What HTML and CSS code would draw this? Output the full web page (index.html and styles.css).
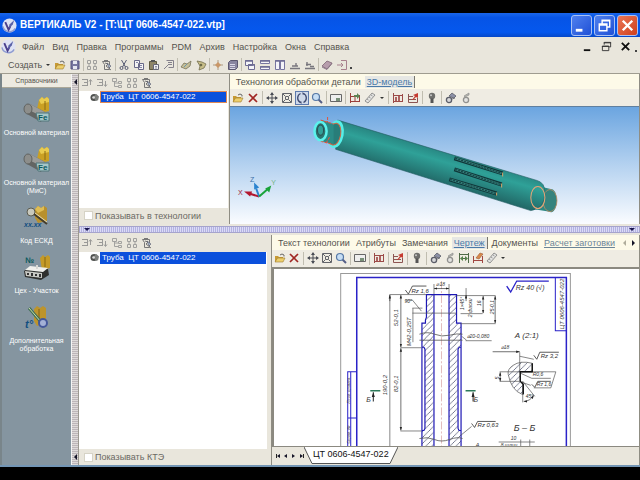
FILE: index.html
```html
<!DOCTYPE html>
<html lang="ru">
<head>
    <meta charset="UTF-8">
    <meta name="viewport" content="width=device-width, initial-scale=1.0">
    <title>ВЕРТИКАЛЬ V2</title>
    <link rel="stylesheet" href="styles.css">
</head>
<body>
    <!-- icon sprite -->
    <svg class="sprite" aria-hidden="true">
        <symbol id="logo" viewBox="0 0 16 16">
            <circle cx="8" cy="8" r="7.5" fill="#dfe3f4"/>
            <path d="M1 9a7 7 0 0 0 13 2" fill="none" stroke="#8e9bd0" stroke-width="1.5"/>
            <path d="M3.5 4.5l3.5 8 2-4" fill="none" stroke="#4a3f8c" stroke-width="2"/>
            <path d="M8 7l5-5-1.500 5-4 4z" fill="#5b63a8"/>
        </symbol>
        <symbol id="open" viewBox="0 0 12 12">
            <path d="M1 10V4h3l1 1h4v5z" fill="#c79a35"/>
            <path d="M1 10l2.500-4H11l-2 4z" fill="#edcf6c" stroke="#9b7a31" stroke-width=".6"/>
            <path d="M6 3q2-2 4 0v1.500" fill="none" stroke="#686868"/>
        </symbol>
        <symbol id="save" viewBox="0 0 12 12">
            <path d="M2 2h8v8H2z" fill="#77769f" stroke="#565380"/>
            <path d="M4 2h4v3H4zM4 7h4v3H4z" fill="#e6e6f0"/>
        </symbol>
        <symbol id="tree-up" viewBox="0 0 12 12">
            <path d="M1 2.500h6M3 5.500h4M1 8.500h6M6.500 2v7M9.500 8V3M8 4.500l1.500-2 1.500 2" fill="none" stroke="#9a9a98"/>
        </symbol>
        <symbol id="tree-down" viewBox="0 0 12 12">
            <path d="M1 2.500h6M3 5.500h4M1 8.500h6M6.500 2v7M9.500 4v5M8 7.500l1.500 2 1.500-2" fill="none" stroke="#9a9a98"/>
        </symbol>
        <symbol id="nodes" viewBox="0 0 12 12">
            <path d="M1.500 1.500h4v3h-4zM7.500 4.500h3v2h-3zM7.500 8.500h3v2h-3zM3.500 5v4.500h4M3.500 6h4" fill="none" stroke="#a2a2a0"/>
        </symbol>
        <symbol id="grid" viewBox="0 0 12 12">
            <path d="M1.500 1.500h3v3h-3zM7.500 1.500h3v3h-3zM1.500 7.500h3v3h-3zM7.500 7.500h3v3h-3zM3 5v2M9 5v2" fill="none" stroke="#a0a09e"/>
        </symbol>
        <symbol id="clipnode" viewBox="0 0 12 12">
            <path d="M1.500 2.500h7v8h-5v-5zM3 1.500h4M4 4l3 1-2 2 5 4" fill="none" stroke="#777"/>
            <path d="M6 4l4 3-2 2z" fill="#a8b9cf" stroke="#556"  stroke-width=".6"/>
        </symbol>
        <symbol id="cut" viewBox="0 0 12 12">
            <path d="M3.500 1l4 7M8.500 1l-4 7" stroke="#565a72" fill="none"/>
            <circle cx="3.500" cy="9" r="1.500" fill="none" stroke="#565a72"/>
            <circle cx="8.500" cy="9" r="1.500" fill="none" stroke="#565a72"/>
        </symbol>
        <symbol id="copy" viewBox="0 0 12 12">
            <path d="M1.500 1.500h5v7h-5zM5.500 4.500h5v6h-5z" fill="#f4f4f4" stroke="#686888"/>
            <path d="M7 6.500h2M7 8.500h2M3 3.500h2" stroke="#88a"/>
        </symbol>
        <symbol id="paste" viewBox="0 0 12 12">
            <path d="M1.500 2.500h7v8h-7z" fill="#8e8568" stroke="#5e593f"/>
            <path d="M3 1h4v2H3z" fill="#555"/>
            <path d="M5.500 5.500h5v5h-5z" fill="#f0f0f4" stroke="#667"/>
            <path d="M7 7.500h2M7 9h2" stroke="#778" stroke-width=".8"/>
        </symbol>
        <symbol id="sheet" viewBox="0 0 12 12">
            <path d="M3.500 1.500h7v7h-5M5 3.500h4M5 5.500h4M1 10l4-4" fill="none" stroke="#84818c"/>
        </symbol>
        <symbol id="hand" viewBox="0 0 12 12">
            <path d="M1 8l3-4 3 1 4-3-1 5-4 3z" fill="#c6bf98" stroke="#77735b" stroke-width=".8"/>
            <path d="M4 8l3-3" stroke="#6c96a8"/>
        </symbol>
        <symbol id="hand2" viewBox="0 0 12 12">
            <path d="M2 2l5 1 4 2-2 4-5 2 1-4z" fill="#c8be88" stroke="#736e4f" stroke-width=".8"/>
            <circle cx="6" cy="6" r="1.300" fill="#6b6a48"/>
        </symbol>
        <symbol id="spark" viewBox="0 0 12 12">
            <path d="M6 1v10M1 6h10" stroke="#ab9a83"/>
            <path d="M6 3l3 3-3 3-3-3z" fill="#c99768"/>
        </symbol>
        <symbol id="stack" viewBox="0 0 12 12">
            <path d="M1.500 3.500l2-2h7v7l-2 2h-7z" fill="#8985a0" stroke="#5c5870"/>
            <path d="M3 5.500h5M3 7.500h5M3 9.500h5" stroke="#d9d7e6"/>
        </symbol>
        <symbol id="cascade" viewBox="0 0 12 12">
            <path d="M1.500 1.500h7v5h-7zM4.500 5.500h6v5h-6z" fill="#f4f4f8" stroke="#6e6c94"/>
            <path d="M1 2h8M4 6h7" stroke="#6e6c94" stroke-width="1.500"/>
        </symbol>
        <symbol id="tile-h" viewBox="0 0 12 12">
            <path d="M1.500 1.500h9v3h-9zM1.500 7.500h9v3h-9z" fill="#f4f4f8" stroke="#7776a0"/>
            <path d="M1 2h10M1 8h10" stroke="#6e6c94" stroke-width="1.500"/>
        </symbol>
        <symbol id="tile-v" viewBox="0 0 12 12">
            <path d="M1.500 1.500h4v9h-4zM6.500 1.500h4v9h-4z" fill="#f4f4f8" stroke="#7776a0"/>
            <path d="M1 2h10" stroke="#6e6c94" stroke-width="1.500"/>
        </symbol>
        <symbol id="tray-a" viewBox="0 0 12 12">
            <path d="M1 9.500h10M3 7h6M7 4v3" fill="none" stroke="#79777e" stroke-width="1.400"/>
        </symbol>
        <symbol id="tray-b" viewBox="0 0 12 12">
            <path d="M2 5.500h5M1 9.500h10M3 3v4M6 7.500h4" fill="none" stroke="#79777e" stroke-width="1.400"/>
        </symbol>
        <symbol id="book" viewBox="0 0 12 12">
            <path d="M1 7l5-5 5 2-5 6z" fill="#b79dac" stroke="#7e6575" stroke-width=".8"/>
            <path d="M1 8l5 2.500 5-6" fill="none" stroke="#8a7787"/>
        </symbol>
        <symbol id="exit" viewBox="0 0 12 12">
            <path d="M5 1.500h5.500v9H5M1 6h6M5 4l2 2-2 2" fill="none" stroke="#a8818e"/>
        </symbol>
        <symbol id="delete" viewBox="0 0 12 12">
            <path d="M2 2l8 8M10 2l-8 8" stroke="#a02623" stroke-width="1.700"/>
        </symbol>
        <symbol id="move" viewBox="0 0 12 12">
            <path d="M6 1v10M1 6h10" stroke="#4a4d55"/>
            <path d="M4 3l2-3 2 3zM4 9l2 3 2-3zM3 4L0 6l3 2zM9 4l3 2-3 2z" fill="#4a4d55"/>
        </symbol>
        <symbol id="fit" viewBox="0 0 12 12">
            <path d="M1.500 1.500h9v9h-9zM4.500 4.500h3v3h-3zM2 2l2 2M10 2L8 4M2 10l2-2M10 10l-2-2" fill="none" stroke="#62646a"/>
        </symbol>
        <symbol id="rotate" viewBox="0 0 12 12">
            <path d="M4.500 1.500a5 5 0 0 0 0 9M7.500 1.500a5 5 0 0 1 0 9" fill="none" stroke="#3f4a70" stroke-width="1.300"/>
            <path d="M2.500 9.500h3v2.500zM9.500 2.500h-3V0z" fill="#3f4a70"/>
        </symbol>
        <symbol id="zoom" viewBox="0 0 12 12">
            <path d="M7.500 7.500l3.500 3.500" stroke="#555f86" stroke-width="2"/>
            <circle cx="5" cy="5" r="3.500" fill="#c7def5" stroke="#5577a5" stroke-width="1.200"/>
        </symbol>
        <symbol id="window" viewBox="0 0 12 12">
            <path d="M.5 2.500h11v7H.5z" fill="#eee" stroke="#666"/>
            <path d="M6 6h4v3H6z" fill="#789078"/>
        </symbol>
        <symbol id="insert" viewBox="0 0 12 12">
            <path d="M1.500 1v10M1 4.500h10M1 9.500h10M10.500 3v7M6 5v4" fill="none" stroke="#9b3f3a"/>
            <path d="M5 3h3V1l3 3-3 3V5H5z" fill="#5c8453"/>
        </symbol>
        <symbol id="marks" viewBox="0 0 12 12">
            <path d="M1.500 1v10M1 3.500h10M1 9.500h10M10.500 2v8" fill="none" stroke="#9b4a48"/>
            <path d="M3 5h2v4H3zM6 4h2v5H6z" fill="#ae6360"/>
        </symbol>
        <symbol id="marks-arrow" viewBox="0 0 12 12">
            <path d="M1.500 2v8.500h9V6M1 4.500h5M1 7.500h8" fill="none" stroke="#8d5552"/>
            <path d="M5 8l3-4-2-1 5-2v5L9 5 6 8z" fill="#c53b31"/>
        </symbol>
        <symbol id="ruler" viewBox="0 0 12 12">
            <path d="M1 9l7-8 3 2-7 8z" fill="#e4e4e2" stroke="#888" stroke-width=".9"/>
            <path d="M3 7l1.500 1M5 5l1.500 1M7 3l1.500 1" stroke="#777" stroke-width=".7"/>
        </symbol>
        <symbol id="bulb" viewBox="0 0 12 12">
            <circle cx="6" cy="4" r="3.200" fill="#6f6f6d"/>
            <path d="M4.500 6.500h3V11h-3z" fill="#555"/>
            <circle cx="5" cy="3.200" r="1" fill="#c8c8c8"/>
        </symbol>
        <symbol id="gears" viewBox="0 0 12 12">
            <circle cx="4" cy="8" r="2.600" fill="#d8d8da" stroke="#5b5d68" stroke-width="1.300"/>
            <path d="M4 4l3-3 4 3-2 2-3-1zM7 7l3-1" fill="#8c90a6" stroke="#5b5d68" stroke-width=".8"/>
        </symbol>
        <symbol id="gear-light" viewBox="0 0 12 12">
            <circle cx="6" cy="8" r="2.600" fill="#e4e4e2" stroke="#91918f" stroke-width="1.300"/>
            <path d="M4 4l5-3v2L5 5z" fill="#b4b4b0" stroke="#91918f" stroke-width=".7"/>
        </symbol>
        <symbol id="fitgreen" viewBox="0 0 12 12">
            <path d="M1.500 1v10M10.500 1v10M1 2.500h10M3 6.500h6" fill="none" stroke="#4f6a47"/>
            <path d="M5 4v5L2 6.500zM7 4v5l3-2.500z" fill="#54804a"/>
        </symbol>
        <symbol id="fitred" viewBox="0 0 12 12">
            <path d="M1.500 4v7M10.500 4v7M2 8.500h8" fill="none" stroke="#a14742"/>
            <path d="M4 6l4-5 3 1-4 5z" fill="#d88a4b" stroke="#9e5a38" stroke-width=".6"/>
        </symbol>
        <symbol id="part" viewBox="0 0 10 10">
            <circle cx="4.500" cy="5" r="4" fill="#4f514f"/>
            <path d="M4 4l3-3 3 3-1 4-3 1z" fill="#7d807d"/>
            <circle cx="4" cy="5" r="1.500" fill="#dadada"/>
        </symbol>

        <symbol id="material" viewBox="0 0 28 28">
            <path d="M16 4l3-3 2 2 3-2 2 2v12l-8 2-4-4z" fill="#caa023"/>
            <path d="M16 4l3-3 2 2 3-2 2 2v3l-8 2z" fill="#e9cb4e"/>
            <path d="M22 5v9" stroke="#8a6b14"/>
            <path d="M7 8L22 16 18 26 4 18z" fill="#636563"/>
            <path d="M7 8L22 16l-2 5L4 13z" fill="#9b9c99"/>
            <ellipse cx="5" cy="13" rx="4" ry="5" fill="#8d8e8b" stroke="#60625f"/>
            <path d="M13 17h13v8H15z" fill="#a6c6c8" stroke="#51777b"/>
            <text x="15" y="24" class="glyph-bold">Fe</text>
        </symbol>
        <symbol id="eskd" viewBox="0 0 28 28">
            <path d="M12 5l3-3 3 2 3-2 3 2v13l-9 2-3-5z" fill="#b8902d"/>
            <path d="M12 5l3-3 3 2 3-2v4l-6 3z" fill="#dfbd55"/>
            <circle cx="8" cy="8" r="4" fill="#c9c9bd" stroke="#5d5d51"/>
            <path d="M11 10l13 10" stroke="#443d2c" stroke-width="2"/>
            <path d="M12 9l12 9" stroke="#e2d9b4"/>
            <text x="1" y="23" class="glyph-code">xx.xx</text>
        </symbol>
        <symbol id="shop" viewBox="0 0 28 28">
            <path d="M17 4l3-3 2 2 3-2 2 2v11l-8 2z" fill="#c49a28"/>
            <path d="M22 3v10" stroke="#86660f"/>
            <path d="M1 17l6-4 18 2 1 6-8 5L2 23z" fill="#2f302e"/>
            <path d="M2 16l5-4 18 2-5 4z" fill="#f0f0ec"/>
            <path d="M2 17l17 2v5L3 22z" fill="#c9cac5"/>
            <path d="M5 19v2M9 19v3M13 20v2M17 20v3" stroke="#333" stroke-width="2"/>
            <path d="M14 15v-4" stroke="#d9d9d5" stroke-width="2"/>
            <text x="2" y="9" class="glyph-bold">№</text>
        </symbol>
        <symbol id="extra" viewBox="0 0 28 28">
            <path d="M11 5l3-3 3 2 3-2 3 2v15l-9 3-3-5z" fill="#bd942c"/>
            <path d="M16 5v14" stroke="#7d6018"/>
            <path d="M6 4l12 14" stroke="#416e56" stroke-width="3"/>
            <path d="M6 4l12 14" stroke="#c8e0a8"/>
            <circle cx="20" cy="19" r="4" fill="#a4b1d6" stroke="#45589b" stroke-width="2"/>
            <text x="2" y="24" class="glyph-code big">t°</text>
        </symbol>
    </svg>

    <div class="window">
        <header class="titlebar">
            <svg class="logo"><use href="#logo"/></svg>
            <h1>ВЕРТИКАЛЬ V2 - [T:\ЦТ 0606-4547-022.vtp]</h1>
            <div class="window-buttons">
                <button class="win-btn" aria-label="Свернуть"><svg viewBox="0 0 20 20"><path d="M4 15h7" stroke="#fff" stroke-width="3"/></svg></button>
                <button class="win-btn" aria-label="Восстановить"><svg viewBox="0 0 20 20"><path d="M7.500 8V4.500h8v7H13M7 5h9M4.500 8.500h8v7h-8zM4 9.500h9" fill="none" stroke="#fff" stroke-width="1.500"/></svg></button>
                <button class="win-btn win-close" aria-label="Закрыть"><svg viewBox="0 0 20 20"><path d="M5 5l10 10M15 5L5 15" stroke="#fff" stroke-width="2.500"/></svg></button>
            </div>
        </header>

        <nav class="menubar">
            <svg class="logo"><use href="#logo"/></svg>
            <button>Файл</button>
            <button>Вид</button>
            <button>Правка</button>
            <button>Программы</button>
            <button>PDM</button>
            <button>Архив</button>
            <button>Настройка</button>
            <button>Окна</button>
            <button>Справка</button>
            <div class="mdi-buttons">
                <button aria-label="Свернуть окно"><svg viewBox="0 0 12 12"><path d="M2 10h7" stroke="#111" stroke-width="2"/></svg></button>
                <button aria-label="Восстановить окно"><svg viewBox="0 0 12 12"><path d="M3.500 4V1.500h7v5H9M3 2h8M1.500 5.500h7v5h-7zM1 6h8" fill="none" stroke="#333"/></svg></button>
                <button aria-label="Закрыть окно"><svg viewBox="0 0 12 12"><path d="M2 2l8 8M10 2l-8 8" stroke="#111" stroke-width="2"/></svg></button>
            </div>
            <i class="more"></i>
        </nav>

        <div class="toolbar main-toolbar">
            <button class="create">Создать <i class="caret"></i></button>
            <button class="tool" aria-label="Открыть"><svg><use href="#open"/></svg></button>
            <button class="tool" aria-label="Сохранить"><svg><use href="#save"/></svg></button>
            <span class="sep"></span>
            <button class="tool" aria-label="Дерево"><svg><use href="#grid"/></svg></button>
            <button class="tool" aria-label="Узел"><svg><use href="#clipnode"/></svg></button>
            <span class="sep"></span>
            <button class="tool" aria-label="Вырезать"><svg><use href="#cut"/></svg></button>
            <button class="tool" aria-label="Копировать"><svg><use href="#copy"/></svg></button>
            <button class="tool" aria-label="Вставить"><svg><use href="#paste"/></svg></button>
            <button class="tool" aria-label="Лист"><svg><use href="#sheet"/></svg></button>
            <span class="sep"></span>
            <button class="tool" aria-label="Взять"><svg><use href="#hand"/></svg></button>
            <button class="tool" aria-label="Вернуть"><svg><use href="#hand2"/></svg></button>
            <span class="sep"></span>
            <button class="tool" aria-label="Расчет"><svg><use href="#spark"/></svg></button>
            <button class="tool" aria-label="Комплект"><svg><use href="#stack"/></svg></button>
            <span class="sep"></span>
            <button class="tool" aria-label="Каскадом"><svg><use href="#cascade"/></svg></button>
            <button class="tool" aria-label="По горизонтали"><svg><use href="#tile-h"/></svg></button>
            <button class="tool" aria-label="По вертикали"><svg><use href="#tile-v"/></svg></button>
            <button class="tool" aria-label="Свернуть все"><svg><use href="#tray-a"/></svg></button>
            <button class="tool" aria-label="Упорядочить"><svg><use href="#tray-b"/></svg></button>
            <span class="sep"></span>
            <button class="tool" aria-label="Справка"><svg><use href="#book"/></svg></button>
            <button class="tool" aria-label="Выход"><svg><use href="#exit"/></svg></button>
            <i class="more"></i>
        </div>

        <div class="workspace">
            <aside class="sidebar">
                <button class="sidebar-head">Справочники</button>
                <div class="sidebar-list">
                    <button class="ref"><svg><use href="#material"/></svg>Основной материал</button>
                    <button class="ref"><svg><use href="#material"/></svg>Основной материал<br>(МиС)</button>
                    <button class="ref"><svg><use href="#eskd"/></svg>Код ЕСКД</button>
                    <button class="ref"><svg><use href="#shop"/></svg>Цех - Участок</button>
                    <button class="ref"><svg><use href="#extra"/></svg>Дополнительная<br>обработка</button>
                </div>
            </aside>
            <div class="split-v"><i class="arrow-left"></i><i class="arrow-left"></i></div>

            <main class="panes">
                <div class="row row-top">
                    <section class="tree-pane tree-top">
                        <div class="toolbar tree-toolbar">
                            <button class="tool" aria-label="Вверх"><svg><use href="#tree-up"/></svg></button>
                            <button class="tool" aria-label="Вниз"><svg><use href="#tree-down"/></svg></button>
                            <button class="tool" aria-label="Ветвь"><svg><use href="#nodes"/></svg></button>
                            <button class="tool" aria-label="Все узлы"><svg><use href="#grid"/></svg></button>
                            <button class="tool" aria-label="Выбор"><svg><use href="#clipnode"/></svg></button>
                        </div>
                        <ul class="tree">
                            <li><svg><use href="#part"/></svg><span class="node outlined">Труба&nbsp; ЦТ 0606-4547-022</span></li>
                        </ul>
                        <label class="check"><input type="checkbox">Показывать в технологии</label>
                    </section>

                    <section class="view view-3d">
                        <div class="tabs">
                            <button>Технология обработки детали</button>
                            <button class="current">3D-модель</button>
                        </div>
                        <div class="toolbar view-toolbar">
                            <button class="tool" aria-label="Открыть модель"><svg><use href="#open"/></svg></button>
                            <button class="tool" aria-label="Удалить"><svg><use href="#delete"/></svg></button>
                            <span class="sep"></span>
                            <button class="tool" aria-label="Сдвинуть"><svg><use href="#move"/></svg></button>
                            <button class="tool" aria-label="Показать все"><svg><use href="#fit"/></svg></button>
                            <button class="tool pressed" aria-label="Повернуть"><svg><use href="#rotate"/></svg></button>
                            <button class="tool" aria-label="Масштаб"><svg><use href="#zoom"/></svg></button>
                            <span class="sep"></span>
                            <button class="tool" aria-label="Окно"><svg><use href="#window"/></svg></button>
                            <span class="sep"></span>
                            <button class="tool" aria-label="Вставить размер"><svg><use href="#insert"/></svg></button>
                            <button class="tool" aria-label="Измерить"><svg><use href="#ruler"/></svg></button>
                            <button class="tool narrow" aria-label="Ещё"><i class="caret"></i></button>
                            <span class="sep"></span>
                            <button class="tool" aria-label="Метки"><svg><use href="#marks"/></svg></button>
                            <button class="tool" aria-label="Перенести"><svg><use href="#marks-arrow"/></svg></button>
                            <span class="sep"></span>
                            <button class="tool" aria-label="Подсветка"><svg><use href="#bulb"/></svg></button>
                            <span class="sep"></span>
                            <button class="tool" aria-label="Параметры"><svg><use href="#gears"/></svg></button>
                            <button class="tool" aria-label="Обновить"><svg><use href="#gear-light"/></svg></button>
                        </div>
                        <div class="scene">
                            <svg viewBox="230 107 408 116" preserveAspectRatio="xMinYMin slice">
                                <defs>
                                    <linearGradient id="pipe" gradientUnits="userSpaceOnUse" x1="440" y1="149" x2="431" y2="180">
                                        <stop offset="0" stop-color="#27837f"/>
                                        <stop offset=".35" stop-color="#2fa198"/>
                                        <stop offset=".6" stop-color="#2a8c86"/>
                                        <stop offset="1" stop-color="#226b69"/>
                                    </linearGradient>
                                </defs>
                                <!-- right neck -->
                                <path d="M538 186l13 3a5 11 0 0 1-3 22l-14-2z" fill="#2c8883"/>
                                <ellipse cx="548" cy="200" rx="7" ry="11" fill="#35837d" stroke="#c58d61" stroke-width=".8"/>
                                <!-- body -->
                                <path d="M337 120L535 180q8 2 8 12 0 16-14 18L335 149z" fill="url(#pipe)" stroke="#235c63" stroke-width=".6"/>
                                <ellipse cx="536" cy="197" rx="7" ry="11" fill="none" stroke="#e8a577"/>
                                <!-- slots -->
                                <g fill="none" stroke="#0f3739" stroke-width="4">
                                    <path d="M453 158l48 15M453 169l47 15M448 179l47 14"/>
                                    <path d="M454 158l46 15M454 169l45 15M449 179l45 14" stroke="#37807b" stroke-width="2"/>
                                    <path d="M454 158l46 15M454 169l45 15M449 179l45 14" stroke="#123f42" stroke-width="1" stroke-dasharray="2 1"/>
                                </g>
                                <path d="M501 172v4M500 183v4M495 192v3" stroke="#d5a267"/>
                                <!-- left neck -->
                                <ellipse cx="335" cy="134" rx="8" ry="14" fill="#55efe8" transform="rotate(10 335 134)"/>
                                <ellipse cx="334" cy="134" rx="6" ry="11" fill="#287d79" stroke="#cb6746" transform="rotate(10 334 134)"/>
                                <path d="M321 120l12 4v20l-12-3z" fill="#2b8b86"/>
                                <path d="M320 120l13 4M320 141l12 3M327 117v5M329 137l-3 5" stroke="#e1543d" fill="none" stroke-dasharray="3 1"/>
                                <ellipse cx="320" cy="131" rx="6" ry="9" fill="#2c746f" stroke="#5cf2ed" stroke-width="2.500"/>
                                <ellipse cx="320" cy="130" rx="3" ry="5" fill="#31a098" stroke="#2b4d53"/>
                                <!-- axes -->
                                <path d="M259 196l-10-3" stroke="#b3172f" stroke-width="2"/><path d="M244 191l8 0-2 5z" fill="#b3172f"/>
                                <path d="M259 196l-3-8" stroke="#2b83cf" stroke-width="2"/><path d="M254 182l5 5-5 2z" fill="#2b83cf"/>
                                <path d="M259 196l8-7" stroke="#19a33a" stroke-width="2"/><path d="M271 185l-2 7-4-4z" fill="#19a33a"/>
                                <text x="238" y="194" class="axis" fill="#9c2338">X</text>
                                <text x="250" y="182" class="axis" fill="#3c6fa8">Z</text>
                                <text x="271" y="185" class="axis" fill="#76b583">Y</text>
                            </svg>
                        </div>
                    </section>
                </div>

                <div class="split-h"><i class="arrow-down"></i><i class="arrow-down"></i></div>

                <div class="row row-bottom">
                    <section class="tree-pane tree-bottom">
                        <div class="toolbar tree-toolbar">
                            <button class="tool" aria-label="Вверх"><svg><use href="#tree-up"/></svg></button>
                            <button class="tool" aria-label="Вниз"><svg><use href="#tree-down"/></svg></button>
                            <button class="tool" aria-label="Ветвь"><svg><use href="#nodes"/></svg></button>
                            <button class="tool" aria-label="Все узлы"><svg><use href="#grid"/></svg></button>
                            <button class="tool" aria-label="Выбор"><svg><use href="#clipnode"/></svg></button>
                        </div>
                        <ul class="tree">
                            <li><svg><use href="#part"/></svg><span class="node">Труба&nbsp; ЦТ 0606-4547-022</span></li>
                        </ul>
                        <label class="check"><input type="checkbox">Показывать КТЭ</label>
                    </section>

                    <section class="view view-drawing">
                        <div class="tabs">
                            <button>Текст технологии</button>
                            <button>Атрибуты</button>
                            <button>Замечания</button>
                            <button class="current">Чертеж</button>
                            <button>Документы</button>
                            <button class="linked">Расчет заготовки</button>
                            <span class="tab-scroll"><i class="arrow-left dim"></i><i class="arrow-right"></i></span>
                        </div>
                        <div class="toolbar view-toolbar compact">
                            <button class="tool" aria-label="Открыть чертеж"><svg><use href="#open"/></svg></button>
                            <button class="tool" aria-label="Удалить"><svg><use href="#delete"/></svg></button>
                            <span class="sep"></span>
                            <button class="tool" aria-label="Сдвинуть"><svg><use href="#move"/></svg></button>
                            <button class="tool" aria-label="Показать все"><svg><use href="#fit"/></svg></button>
                            <button class="tool" aria-label="Масштаб"><svg><use href="#zoom"/></svg></button>
                            <span class="sep"></span>
                            <button class="tool" aria-label="Окно"><svg><use href="#window"/></svg></button>
                            <span class="sep"></span>
                            <button class="tool" aria-label="Метки"><svg><use href="#marks"/></svg></button>
                            <span class="sep"></span>
                            <button class="tool" aria-label="Перенести"><svg><use href="#marks-arrow"/></svg></button>
                            <span class="sep"></span>
                            <button class="tool" aria-label="Подсветка"><svg><use href="#bulb"/></svg></button>
                            <span class="sep"></span>
                            <button class="tool" aria-label="Параметры"><svg><use href="#gears"/></svg></button>
                            <button class="tool" aria-label="Обновить"><svg><use href="#gear-light"/></svg></button>
                            <button class="tool" aria-label="Размер"><svg><use href="#fitgreen"/></svg></button>
                            <button class="tool" aria-label="Допуск"><svg><use href="#fitred"/></svg></button>
                            <button class="tool" aria-label="Измерить"><svg><use href="#ruler"/></svg></button>
                            <button class="tool narrow" aria-label="Ещё"><i class="caret"></i></button>
                        </div>
                        <div class="sheet">
                            <svg viewBox="274 268 364 177" preserveAspectRatio="xMinYMin slice">
                                <defs>
                                    <pattern id="hatch" width="6" height="6" patternUnits="userSpaceOnUse">
                                        <path d="M-1 1l2-2M0 6l6-6M5 7l2-2" stroke="#444a66" stroke-width=".7"/>
                                    </pattern>
                                    <marker id="arr" viewBox="0 0 6 4" refX="6" refY="2" markerWidth="5" markerHeight="4" orient="auto-start-reverse">
                                        <path d="M0 0l6 2-6 2z" fill="#222"/>
                                    </marker>
                                </defs>
                                <!-- sheet frame -->
                                <path d="M340.500 450V272.500h229V450" fill="none" stroke="#999"/>
                                <path d="M356.500 450V276.500h209V450" fill="none" stroke="#2a22c8" stroke-width="1.500"/>
                                <path d="M554.500 276v53.500h11M347.500 450v-79.500h9M350.500 370v80M347 416.500h9" fill="none" stroke="#2a22c8"/>
                                <text class="gost" transform="translate(563 328) rotate(-90)" font-size="6">ЦТ 0606-4547-022</text>
                                <text class="gost" transform="translate(350 402) rotate(-90)" font-size="4">Перв. примен.</text>
                                <text class="gost" transform="translate(350 442) rotate(-90)" font-size="4">Справ. №</text>
                                <!-- shaft -->
                                <path d="M426 294h7v156h-11.500V429h3V346h-3V322h4.500z" fill="url(#hatch)"/>
                                <path d="M448.500 294h7v28h5v24h-3v83h3v21h-12z" fill="url(#hatch)"/>
                                <path d="M426 316V293.500h30V322h4.500V450M426 316l-1 3v3h-3.500V450M433.500 294V450M448.500 294V450M421.500 346h2l1 2v79l-1 2h-2M460.500 346h-2l-1 2v79l1 2h2" fill="none" stroke="#1d18b4" stroke-width="1.200"/>
                                <path d="M441 280V450" stroke="#d6a0a0" stroke-width=".7" stroke-dasharray="8 2 2 2"/>
                                <path d="M419 333q8-3 15 0t15 1 13-1M419 339h43M419 437q8-2 15 1t15 0 13-1" fill="none" stroke="#555" stroke-width=".8"/>
                                <!-- dimensions -->
                                <g fill="none" stroke="#555" stroke-width=".7">
                                    <path d="M389 293.500h37M389.500 294v156M400 346.500h21M400 429.500h21M433.500 283v10M448.500 283v10M412.500 307v34M412 312h44M405 299l7 0 9 11M412 307h10"/>
                                    <path d="M456 294.500h39M460 312.500h22M460 322.500h35M465.500 287v10M465 339.500h26M461 335l5 4"/>
                                    <path d="M460 434l11-9M519 351v20M519 355l14 3M499 370.500h56l-5 16h-17M499 380h20M520 372l11 5h19M521 381l9 3M522 380v21M522 380l12 15M498 440.500h36M520 438v12M529 438v12"/>
                                </g>
                                <g fill="none" stroke="#333" stroke-width=".7" marker-start="url(#arr)" marker-end="url(#arr)">
                                    <path d="M433.500 287.500h15"/>
                                    <path d="M400.500 294v52"/>
                                    <path d="M400.500 347v82"/>
                                    <path d="M482.500 295v17"/>
                                    <path d="M494.500 295v27"/>
                                    <path d="M499.500 371v9"/>
                                    <path d="M523 400q6 0 10-6"/>
                                </g>
                                <path d="M389.500 300v-6" stroke="#333" stroke-width=".7" marker-end="url(#arr)"/>
                                <path d="M465.500 300v-6" stroke="#333" stroke-width=".7" marker-end="url(#arr)"/>
                                <path d="M492 350.500h27" stroke="#333" stroke-width=".7" marker-end="url(#arr)"/>
                                <!-- roughness signs -->
                                <path d="M405 289l3 4 4-8h14M533 354l3 4 3-7h19M531 383l3 3 3-6h13M471 422l3 4 3-6h18" fill="none" stroke="#333" stroke-width=".8"/>
                                <path d="M506 285l4 6 6-11h32" fill="none" stroke="#2a22c8" stroke-width="1.300"/>
                                <!-- section A -->
                                <path d="M531.500 362q-12-3-19 2-6 4-5 9 3 16 14 20h1v-10l-3-3v-9.500h12z" fill="url(#hatch)" stroke="#555" stroke-width=".7"/>
                                <path d="M531.500 362v8.500h-12V380l3 3v10" fill="none" stroke="#111" stroke-width="1.400"/>
                                <!-- section marks -->
                                <path d="M370 389.500h10M465 389.500h10" stroke="#2c7a5a" stroke-width="1.500"/>
                                <path d="M373 400v-9" stroke="#222" marker-end="url(#arr)"/>
                                <path d="M472.500 400v-9" stroke="#222" marker-end="url(#arr)"/>
                                <g class="gost">
                                    <text x="366" y="401" font-size="7">Б</text>
                                    <text x="473" y="401" font-size="7">Б</text>
                                    <text x="436" y="285" font-size="5">⌀18</text>
                                    <text x="411" y="292" font-size="6">Rz 1,6</text>
                                    <text x="404" y="302" font-size="5">90°</text>
                                    <text x="515" y="289" font-size="7">Rz 40 (√)</text>
                                    <text x="514" y="337" font-size="8">А (2:1)</text>
                                    <text x="466" y="337" font-size="5">⌀20-0,080</text>
                                    <text x="500" y="348" font-size="5">⌀18</text>
                                    <text x="540" y="357" font-size="6">Rz 3,2</text>
                                    <text x="532" y="375" font-size="5">R0,6</text>
                                    <text x="536" y="385" font-size="5">Rz 1,6</text>
                                    <text x="525" y="397" font-size="5">45°</text>
                                    <text x="477" y="426" font-size="6">Rz 0,63</text>
                                    <text x="513" y="430" font-size="9">Б – Б</text>
                                    <text x="510" y="438" font-size="5">10</text>
                                    <text x="500" y="445" font-size="5">8 шлиц</text>
                                    <text x="475" y="445" font-size="6">А</text>
                                    <text transform="translate(411 345) rotate(-90)" font-size="6">M42-0,25Т</text>
                                    <text transform="translate(398 325) rotate(-90)" font-size="6">52-0,1</text>
                                    <text transform="translate(398 391) rotate(-90)" font-size="6">82-0,1</text>
                                    <text transform="translate(387 394) rotate(-90)" font-size="6">190-0,2</text>
                                    <text transform="translate(463 309) rotate(-90)" font-size="5">1×45°</text>
                                    <text transform="translate(471 316) rotate(-90)" font-size="5">2 фаски</text>
                                    <text transform="translate(480 305) rotate(-90)" font-size="5">16</text>
                                    <text transform="translate(493 313) rotate(-90)" font-size="5">25-0,1</text>
                                    <text transform="translate(498 378) rotate(-90)" font-size="5">5</text>
                                </g>
                            </svg>
                        </div>
                        <div class="sheet-tabs">
                            <div class="sheet-nav">
                                <button aria-label="Первый лист"><i class="bar"></i><i class="arrow-left"></i></button>
                                <button aria-label="Предыдущий лист"><i class="arrow-left"></i></button>
                                <button aria-label="Следующий лист"><i class="arrow-right"></i></button>
                                <button aria-label="Последний лист"><i class="arrow-right"></i><i class="bar"></i></button>
                            </div>
                            <button class="sheet-tab">
                                <svg viewBox="0 0 9 17"><path d="M0 0h9v16.500H8z" fill="#fff"/><path d="M0 0l8 16.500h1" fill="none" stroke="#555"/></svg>
                                <span>ЦТ 0606-4547-022</span>
                                <svg viewBox="0 0 9 17"><path d="M9 0H0v16.500h1z" fill="#fff"/><path d="M9 0L1 16.500H0" fill="none" stroke="#555"/></svg>
                            </button>
                        </div>
                    </section>
                </div>
            </main>
        </div>
    </div>
</body>
</html>
```
FILE: styles.css
```css
* {
    box-sizing: border-box;
}
body {
    margin: 0;
    padding: 13px 0;
    height: 100vh;
    background: #000;
    font-family: "Liberation Sans", Arial, sans-serif;
    font-size: 9px;
    line-height: 12px;
    color: #55534e;
    overflow: hidden;
}
button {
    margin: 0;
    padding: 0;
    border: none;
    background: none;
    font: inherit;
    color: inherit;
    white-space: nowrap;
}
svg {
    display: block;
    flex: none;
}
.sprite {
    display: none;
}
.window {
    height: 100%;
    display: flex;
    flex-direction: column;
    background: #e9e6dc;
    border-bottom: 2px solid #7395b4;
}

/* title and menu */
.titlebar {
    display: flex;
    align-items: center;
    gap: 3px;
    height: 24px;
    padding: 0 2px;
    background: linear-gradient(#1a66ea, #0654e6 20%, #0558ee 80%, #0648c8);
}
.logo {
    width: 15px;
    height: 15px;
}
.titlebar h1 {
    flex: 1;
    margin: 0;
    font-size: 10px;
    font-weight: bold;
    color: #fff;
}
.window-buttons {
    display: flex;
    gap: 2px;
}
.win-btn {
    width: 21px;
    height: 21px;
    border: 1px solid #a9c1f3;
    border-radius: 3px;
    background: linear-gradient(135deg, #4f80ee, #1f50d6);
}
.win-close {
    background: linear-gradient(135deg, #ea7757, #cf3f1c);
}
.menubar {
    display: flex;
    align-items: center;
    gap: 8px;
    height: 19px;
    padding: 0 3px 0 1px;
}
.menubar .logo {
    margin-right: -2px;
}
.mdi-buttons {
    display: flex;
    gap: 8px;
    margin-left: auto;
}
.mdi-buttons svg {
    width: 11px;
    height: 11px;
}
.more {
    align-self: flex-end;
    width: 2px;
    height: 2px;
    margin-bottom: 4px;
    background: #444;
}
.menubar .more {
    margin-left: -4px;
}

/* toolbars */
.toolbar {
    display: flex;
    align-items: center;
    gap: 1px;
    height: 17px;
    flex: none;
}
.main-toolbar {
    padding-left: 8px;
    border-bottom: 1px solid #9f9c90;
    height: 18px;
}
.create {
    display: flex;
    align-items: center;
    gap: 4px;
    margin-right: 2px;
}
.tool {
    display: flex;
    align-items: center;
    justify-content: center;
    width: 14px;
    height: 14px;
}
.tool svg {
    width: 12px;
    height: 12px;
}
.narrow {
    width: 8px;
}
.pressed {
    border: 1px solid #5c79ad;
    background: #cfd9ea;
}
.sep {
    width: 1px;
    height: 13px;
    background: #c0bdb0;
}
.view-toolbar {
    padding-left: 1px;
    background: #efece3;
}
.view-toolbar .sep {
    margin: 0 1px;
}
.compact {
    gap: 0;
}
.compact .sep {
    margin: 0 2px;
}
.caret {
    border: 2px solid transparent;
    border-top-color: #333;
    border-bottom: none;
}

/* arrows on the splitters and scrollers */
.arrow-left, .arrow-right {
    border: 3px solid transparent;
}
.arrow-left {
    border-right-color: #151528;
    border-left: none;
}
.arrow-right {
    border-left-color: #151528;
    border-right: none;
}
.arrow-down {
    border: 3px solid transparent;
    border-top-color: #1b1650;
    border-bottom: none;
}
.dim {
    border-right-color: #b0ad9c;
}

.workspace {
    flex: 1;
    min-height: 0;
    display: flex;
}

/* reference list */
.sidebar {
    width: 72px;
    border-left: 2px solid #79858a;
    border-right: 1px solid #f5f5f5;
    background: #8595a0;
}
.sidebar-head {
    display: block;
    width: 100%;
    height: 14px;
    border-bottom: 1px solid #aaa798;
    background: #edeae1;
    font-size: 7px;
}
.sidebar-list {
    display: flex;
    flex-direction: column;
    gap: 9px;
    padding-top: 8px;
}
.ref {
    display: flex;
    flex-direction: column;
    align-items: center;
    font-size: 7px;
    line-height: 8px;
    color: #fff;
}
.ref svg {
    width: 28px;
    height: 28px;
    margin-bottom: 5px;
}
.glyph-bold {
    font: bold 8px "Liberation Sans", Arial, sans-serif;
    fill: #0c5a5e;
}
.glyph-code {
    font: italic bold 7px "Liberation Sans", Arial, sans-serif;
    fill: #134f80;
}
.big {
    font-size: 11px;
}

/* splitters */
.split-v {
    display: flex;
    flex-direction: column;
    justify-content: space-between;
    align-items: center;
    width: 7px;
    padding: 5px 0;
    border-right: 1px solid #9c9990;
    background: repeating-linear-gradient(#dedad9 0 1px, #bdb6ba 1px 2px);
}
.split-h {
    display: flex;
    align-items: center;
    justify-content: space-between;
    flex: none;
    height: 7px;
    padding: 0 4px;
    border: 1px solid #a6a4cc;
    background: repeating-linear-gradient(90deg, #dcdcf5 0 1px, #b3b2e2 1px 2px);
}

/* panes */
.panes {
    flex: 1;
    min-width: 0;
    display: flex;
    flex-direction: column;
}
.row {
    display: flex;
    min-height: 0;
}
.row-top {
    flex: 13;
    padding-bottom: 2px;
}
.row-bottom {
    flex: 20;
    padding-top: 2px;
}
.tree-pane {
    display: flex;
    flex-direction: column;
    flex: none;
}
.tree-top {
    width: 26.5%;
}
.tree-bottom {
    width: 33.5%;
}
.tree-toolbar {
    padding-left: 1px;
    height: 17px;
}
.tree {
    flex: 1;
    margin: 0;
    padding: 0 1px 0 11px;
    list-style: none;
    background: #fff;
}
.tree li {
    display: flex;
    align-items: center;
    gap: 1px;
}
.tree li svg {
    width: 9px;
    height: 9px;
}
.node {
    flex: 1;
    padding-left: 1px;
    border: 1px solid #0b50dc;
    background: #0b50dc;
    color: #fff;
    font-size: 8px;
    line-height: 10px;
    white-space: nowrap;
}
.outlined {
    border-color: #e08a55;
}
.check {
    display: flex;
    align-items: center;
    gap: 2px;
    height: 16px;
    padding-left: 5px;
    color: #6b6963;
}
.check input {
    appearance: none;
    width: 9px;
    height: 9px;
    margin: 0;
    border: 1px solid #d6d3c6;
    background: #fff;
}

/* right-hand views */
.view {
    flex: 1;
    min-width: 0;
    display: flex;
    flex-direction: column;
    border-left: 1px solid #8f8d83;
    border-right: 1px solid #8f8d83;
}
.view-3d {
    margin-left: 1px;
}
.view-drawing {
    margin-left: 4px;
}
.tabs {
    display: flex;
    align-items: center;
    gap: 6px;
    height: 15px;
    padding: 1px 4px 0 6px;
    background: #fdfae8;
}
.tabs .current {
    padding: 0 2px;
    margin: 0 -2px;
    border-right: 1px solid #77756c;
    background: #e6e7e4;
    color: #4a7aa8;
    text-decoration: underline;
}
.linked {
    color: #6b8598;
    text-decoration: underline;
}
.tab-scroll {
    display: flex;
    gap: 6px;
    margin-left: auto;
}
.scene {
    flex: 1;
    min-height: 0;
    border-top: 1px solid #5f7f9f;
    background: linear-gradient(#6ba5e0, #b5d2f0 50%, #fafcff);
}
.scene svg, .sheet svg {
    width: 100%;
    height: 100%;
}
.axis {
    font: 7px "Liberation Sans", Arial, sans-serif;
}
.sheet {
    flex: 1;
    min-height: 0;
    border: 1px solid #8b8980;
    border-width: 2px 0 0 2px;
    background: #fff;
}
.gost {
    font-family: "Liberation Sans", Arial, sans-serif;
    font-style: italic;
    fill: #333;
}
.sheet-tabs {
    display: flex;
    height: 19px;
    flex: none;
    border-top: 1px solid #8b8980;
}
.sheet-nav {
    display: flex;
    align-items: center;
    gap: 4px;
    padding-left: 4px;
}
.sheet-nav button {
    display: flex;
    align-items: center;
    width: 4px;
}
.sheet-nav .arrow-left, .sheet-nav .arrow-right {
    border-top-width: 2px;
    border-bottom-width: 2px;
}
.bar {
    width: 1px;
    height: 4px;
    background: #222;
}
.sheet-tab {
    display: flex;
    height: 17px;
    color: #111;
    line-height: 15px;
}
.sheet-tab svg {
    width: 9px;
    height: 17px;
}
.sheet-tab span {
    border-bottom: 1px solid #555;
    background: #fff;
}
```
